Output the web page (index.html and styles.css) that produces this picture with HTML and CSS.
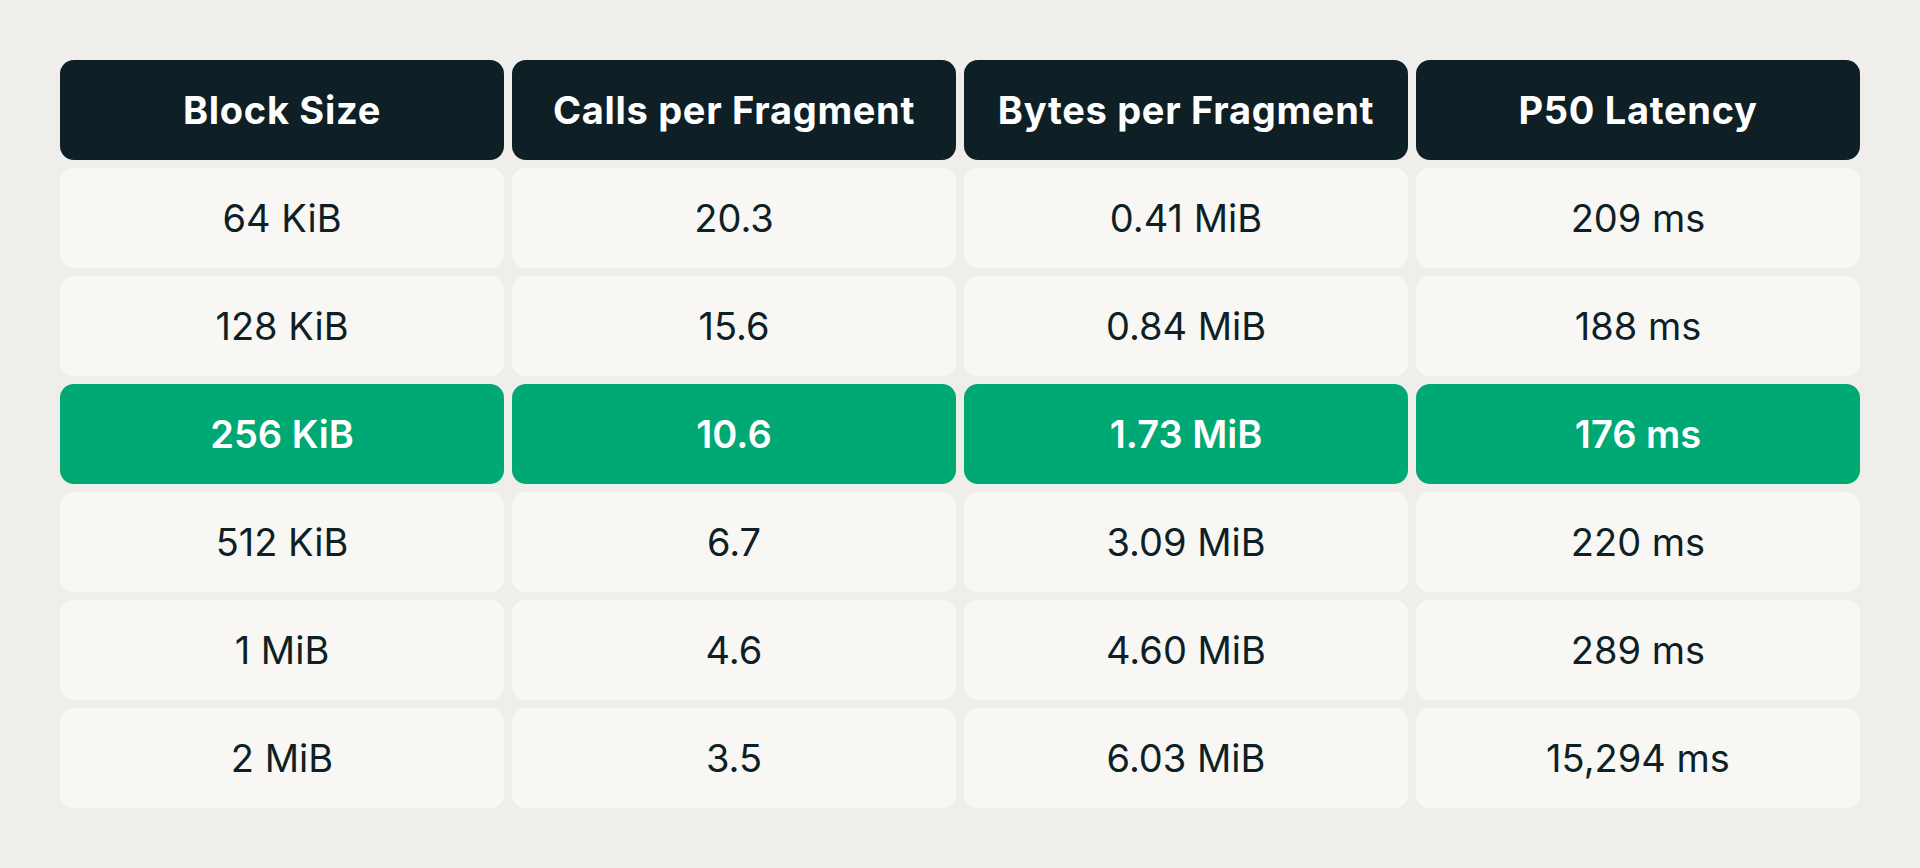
FILE: index.html
```html
<!DOCTYPE html>
<html lang="en">
<head>
<meta charset="utf-8">
<title>Block Size Benchmark</title>
<link rel="stylesheet" href="styles.css">
</head>
<body>
<div class="table">
  <div class="cell head">Block Size</div>
  <div class="cell head">Calls per Fragment</div>
  <div class="cell head">Bytes per Fragment</div>
  <div class="cell head">P50 Latency</div>

  <div class="cell">64 KiB</div>
  <div class="cell">20.3</div>
  <div class="cell">0.41 MiB</div>
  <div class="cell">209 ms</div>

  <div class="cell">128 KiB</div>
  <div class="cell">15.6</div>
  <div class="cell">0.84 MiB</div>
  <div class="cell">188 ms</div>

  <div class="cell hl">256 KiB</div>
  <div class="cell hl">10.6</div>
  <div class="cell hl">1.73 MiB</div>
  <div class="cell hl">176 ms</div>

  <div class="cell">512 KiB</div>
  <div class="cell">6.7</div>
  <div class="cell">3.09 MiB</div>
  <div class="cell">220 ms</div>

  <div class="cell">1 MiB</div>
  <div class="cell">4.6</div>
  <div class="cell">4.60 MiB</div>
  <div class="cell">289 ms</div>

  <div class="cell">2 MiB</div>
  <div class="cell">3.5</div>
  <div class="cell">6.03 MiB</div>
  <div class="cell">15,294 ms</div>
</div>
</body>
</html>
```

FILE: styles.css
```css
html, body {
  margin: 0;
  padding: 0;
  background: #efeeea;
}
body {
  padding: 60px;
  font-family: Inter, "Liberation Sans", sans-serif;
  color: #0e1f26;
}
.table {
  display: grid;
  grid-template-columns: repeat(4, 1fr);
  grid-auto-rows: 100px;
  gap: 8px;
}
.cell {
  display: flex;
  align-items: center;
  justify-content: center;
  background: #f8f7f4;
  border-radius: 14px;
  font-size: 38px;
  font-weight: 400;
}
.head {
  background: #0e1f26;
  color: #ffffff;
  font-weight: 650;
  letter-spacing: 0.7px;
}
.hl {
  background: #00a873;
  color: #ffffff;
  font-weight: 600;
}
```
